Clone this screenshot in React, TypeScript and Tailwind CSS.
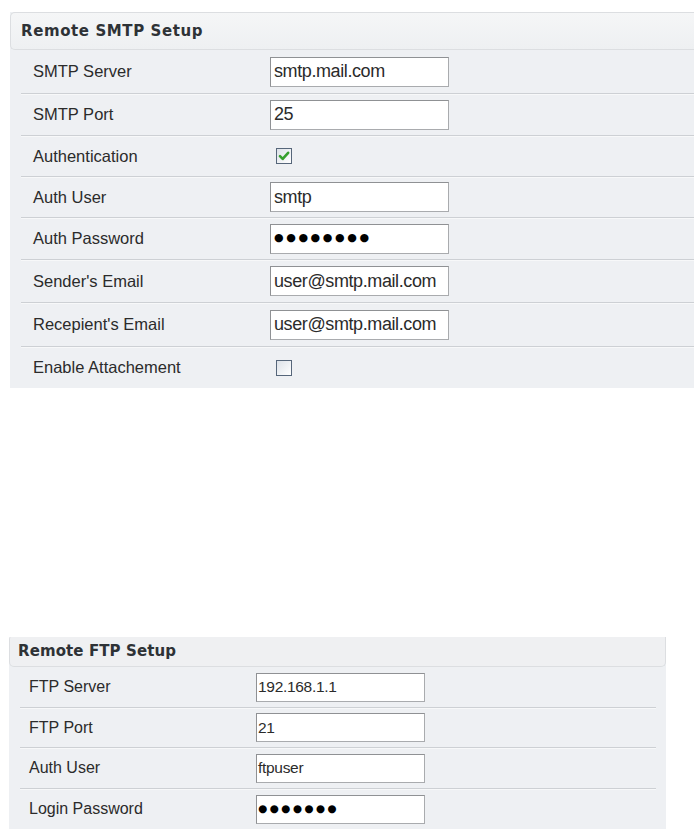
import { Fragment } from "react";

type Field =
  | { label: string; kind: "text"; value: string }
  | { label: string; kind: "password"; length: number }
  | { label: string; kind: "check"; checked: boolean };

const smtpFields: Field[] = [
  { label: "SMTP Server", kind: "text", value: "smtp.mail.com" },
  { label: "SMTP Port", kind: "text", value: "25" },
  { label: "Authentication", kind: "check", checked: true },
  { label: "Auth User", kind: "text", value: "smtp" },
  { label: "Auth Password", kind: "password", length: 8 },
  { label: "Sender's Email", kind: "text", value: "user@smtp.mail.com" },
  { label: "Recepient's Email", kind: "text", value: "user@smtp.mail.com" },
  { label: "Enable Attachement", kind: "check", checked: false },
];

const smtpHeights = [44, 42, 41, 41, 42, 43, 44, 41];

const ftpFields: Field[] = [
  { label: "FTP Server", kind: "text", value: "192.168.1.1" },
  { label: "FTP Port", kind: "text", value: "21" },
  { label: "Auth User", kind: "text", value: "ftpuser" },
  { label: "Login Password", kind: "password", length: 7 },
];

const ftpHeights = [41, 40, 41, 40];

const CheckBox = ({ checked }: { checked: boolean }) => (
  <span className="flex h-[16px] w-[16px] items-center justify-center border border-[#56667a] bg-gradient-to-br from-[#dde2e8] to-[#ffffff]">
    {checked && (
      <svg width="12" height="12" viewBox="0 0 11 11">
        <path
          d="M1.8 5.6 L4.3 8.2 L9.3 2.6"
          fill="none"
          stroke="#36a02e"
          strokeWidth="2.4"
          strokeLinecap="round"
          strokeLinejoin="round"
        />
      </svg>
    )}
  </span>
);

const Panel = ({
  title,
  fields,
  heights,
  big,
}: {
  title: string;
  fields: Field[];
  heights: number[];
  big: boolean;
}) => {
  return (
    <div className={big ? "ml-[10px] w-[700px] bg-[#eef0f3]" : "ml-[9px] w-[657px] bg-[#eef0f3]"}>
      <div
        className={
          big
            ? "flex h-[38px] items-center rounded-tl-[5px] rounded-bl-[5px] border border-r-0 border-[#dcdee1] bg-gradient-to-b from-[#f5f6f7] to-[#eef0f2] pl-[10px]"
            : "flex h-[30px] items-center rounded-tl-[2px] rounded-bl-[5px] rounded-br-[5px] border border-t-0 border-[#dcdee1] bg-[#eff0f2] pl-[8px]"
        }
      >
        <span
          className={
            big
              ? "text-[15px] font-bold tracking-[0.6px] text-[#2e3236]"
              : "text-[15px] font-bold tracking-[0.1px] text-[#2e3236]"
          }
          style={{ fontFamily: '"DejaVu Sans", Verdana, sans-serif' }}
        >
          {title}
        </span>
      </div>
      <div className={big ? "ml-[11px]" : "ml-[11px] mr-[10px]"}>
        {fields.map((f, i) => (
          <Fragment key={f.label + i}>
            <div
              className={
                i === fields.length - 1
                  ? "flex items-center"
                  : "flex items-center border-b border-[#cdd0d4] shadow-[0_1px_0_#f7f8f9]"
              }
              style={{ height: heights[i] }}
            >
              <span
                className={
                  big
                    ? "w-[249px] shrink-0 pl-[12px] text-[16.5px] text-[#2b2b2b]"
                    : "w-[236px] shrink-0 pl-[9px] text-[16px] text-[#2b2b2b]"
                }
                style={{ fontFamily: '"Liberation Sans", Arial, sans-serif' }}
              >
                {f.label}
              </span>
              {f.kind === "check" ? (
                <span className="pl-[6px]">
                  <CheckBox checked={f.checked} />
                </span>
              ) : (
                <div
                  className={
                    big
                      ? "flex h-[30px] w-[179px] items-center overflow-hidden border border-[#a9abae] border-t-[#8f9194] border-l-[#8f9194] bg-white pl-[3px] text-[18px] tracking-[-0.4px] text-[#2b2b2b]"
                      : "flex h-[29px] w-[169px] items-center overflow-hidden border border-[#a9abae] border-t-[#8f9194] border-l-[#8f9194] bg-white pl-[1px] text-[15.5px] tracking-[-0.3px] text-[#2b2b2b]"
                  }
                  style={{ fontFamily: '"Liberation Sans", Arial, sans-serif' }}
                >
                  {f.kind === "text" ? (
                    <span className="whitespace-nowrap">{f.value}</span>
                  ) : (
                    <span
                      className={
                        big
                          ? "whitespace-nowrap text-[11px] tracking-[2.6px] text-black"
                          : "whitespace-nowrap text-[10.5px] tracking-[2.4px] text-black"
                      }
                      style={{ fontFamily: '"DejaVu Sans", sans-serif' }}
                    >
                      {"●".repeat(f.length)}
                    </span>
                  )}
                </div>
              )}
            </div>
          </Fragment>
        ))}
      </div>
    </div>
  );
};

export default function App() {
  return (
    <div className="h-[829px] w-[694px] overflow-hidden bg-white pt-[12px]">
      <Panel title="Remote SMTP Setup" fields={smtpFields} heights={smtpHeights} big />
      <div className="h-[249px]" />
      <Panel title="Remote FTP Setup" fields={ftpFields} heights={ftpHeights} big={false} />
    </div>
  );
}
